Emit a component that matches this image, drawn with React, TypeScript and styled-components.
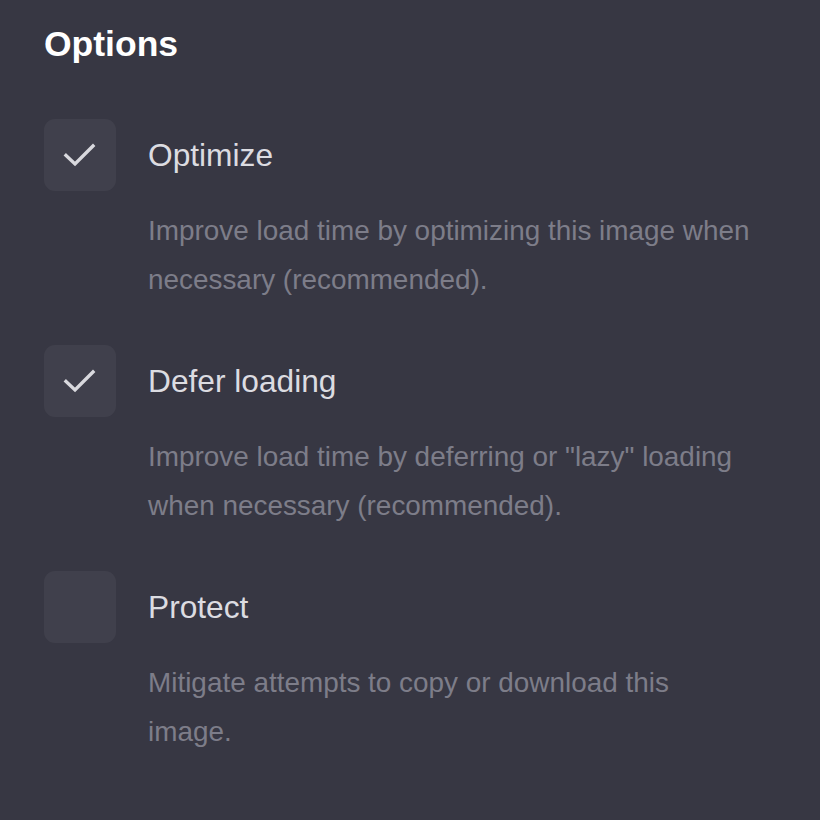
import React from "react";
import styled, { createGlobalStyle } from "styled-components";

const Global = createGlobalStyle`
  html, body {
    margin: 0;
    padding: 0;
    background: #373743;
  }
  body {
    font-family: "Liberation Sans", Arial, Helvetica, sans-serif;
  }
`;

const Page = styled.div`
  box-sizing: border-box;
  width: 820px;
  min-height: 820px;
  padding: 24px 44px 40px 44px;
  background: #373743;
  display: flex;
  flex-direction: column;
`;

const Title = styled.h2`
  margin: 0 0 54px 0;
  font-size: 35.5px;
  line-height: 1.15;
  font-weight: 700;
  color: #ffffff;
`;

const List = styled.div`
  display: flex;
  flex-direction: column;
  gap: 41px;
`;

const Option = styled.div`
  display: flex;
  flex-direction: column;
  gap: 15px;
`;

const Head = styled.label`
  display: flex;
  align-items: center;
  gap: 32px;
  cursor: pointer;
`;

const Box = styled.span<{ $checked: boolean }>`
  width: 72px;
  height: 72px;
  flex: none;
  border-radius: 11px;
  background: #40404c;
  display: flex;
  align-items: center;
  justify-content: center;
  color: #d9d9de;
  svg {
    visibility: ${(p) => (p.$checked ? "visible" : "hidden")};
  }
`;

const Label = styled.span`
  font-size: 31.7px;
  line-height: 1.15;
  color: #dcdce1;
`;

const Desc = styled.p`
  margin: 0;
  padding-left: 104px;
  width: 612px;
  font-size: 27.9px;
  line-height: 49px;
  color: #7d7d89;
`;

const Check = () => (
  <svg width="34" height="26" viewBox="0 0 34 26" fill="none">
    <path
      d="M3 13.5 L12 22 L30 4"
      stroke="currentColor"
      strokeWidth="3.4"
      strokeLinecap="square"
      strokeLinejoin="miter"
    />
  </svg>
);

const options = [
  {
    label: "Optimize",
    desc: "Improve load time by optimizing this image when necessary (recommended).",
    checked: true,
  },
  {
    label: "Defer loading",
    desc: 'Improve load time by deferring or "lazy" loading when necessary (recommended).',
    checked: true,
  },
  {
    label: "Protect",
    desc: "Mitigate attempts to copy or download this image.",
    checked: false,
  },
];

export default function App() {
  return (
    <>
      <Global />
      <Page>
        <Title>Options</Title>
        <List>
          {options.map((o) => (
            <Option key={o.label}>
              <Head>
                <Box $checked={o.checked}>
                  <Check />
                </Box>
                <Label>{o.label}</Label>
              </Head>
              <Desc>{o.desc}</Desc>
            </Option>
          ))}
        </List>
      </Page>
    </>
  );
}
